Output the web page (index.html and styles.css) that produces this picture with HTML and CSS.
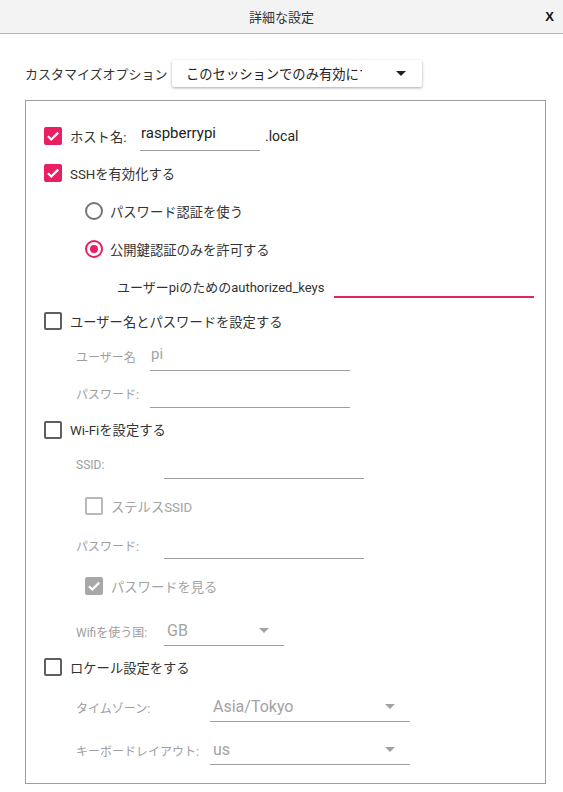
FILE: index.html
```html
<!DOCTYPE html>
<html lang="ja">
<head>
<meta charset="utf-8">
<title>詳細な設定</title>
<link rel="stylesheet" href="styles.css">
</head>
<body>
<header class="titlebar">
  <span class="title">詳細な設定</span>
  <span class="close">X</span>
</header>
<main class="content">
  <div class="option-row">
    <span class="option-label">カスタマイズオプション</span>
    <div class="combo">
      <span class="combo-text">このセッションでのみ有効にする</span>
      <span class="combo-arrow"></span>
    </div>
  </div>

  <section class="panel">
    <div class="row h36">
      <span class="cb on"><svg viewBox="0 0 18 18"><path d="M4 9.2l3.3 3.3L14.2 5.6"/></svg></span>
      <span class="lbl host-lbl">ホスト名:</span>
      <span class="field host-field">raspberrypi</span>
      <span class="suffix">.local</span>
    </div>
    <div class="row h38">
      <span class="cb on"><svg viewBox="0 0 18 18"><path d="M4 9.2l3.3 3.3L14.2 5.6"/></svg></span>
      <span class="lbl">SSHを有効化する</span>
    </div>
    <div class="row h38 indent1">
      <span class="radio"></span>
      <span class="lbl">パスワード認証を使う</span>
    </div>
    <div class="row h38 indent1">
      <span class="radio on"><span class="dot"></span></span>
      <span class="lbl">公開鍵認証のみを許可する</span>
    </div>
    <div class="row h36 indent2">
      <span class="lbl key-lbl">ユーザーpiのためのauthorized_keys</span>
      <span class="field key-field"></span>
    </div>
    <div class="row h34">
      <span class="cb"></span>
      <span class="lbl">ユーザー名とパスワードを設定する</span>
    </div>
    <div class="row h37 sub">
      <span class="sublbl w74">ユーザー名</span>
      <span class="field f200 muted">pi</span>
    </div>
    <div class="row h37 sub">
      <span class="sublbl w74">パスワード:</span>
      <span class="field f200"></span>
    </div>
    <div class="row h35">
      <span class="cb"></span>
      <span class="lbl">Wi-Fiを設定する</span>
    </div>
    <div class="row h36 sub">
      <span class="sublbl w88">SSID:</span>
      <span class="field f200"></span>
    </div>
    <div class="row h46 indent1">
      <span class="cb dis"></span>
      <span class="lbl muted">ステルスSSID</span>
    </div>
    <div class="row h32 sub">
      <span class="sublbl w88">パスワード:</span>
      <span class="field f200"></span>
    </div>
    <div class="row h50 indent1">
      <span class="cb dis on"><svg viewBox="0 0 18 18"><path d="M4 9.2l3.3 3.3L14.2 5.6"/></svg></span>
      <span class="lbl muted">パスワードを見る</span>
    </div>
    <div class="row h40 sub">
      <span class="sublbl w88">Wifiを使う国:</span>
      <span class="select f120"><span class="sel-text">GB</span><span class="sel-arrow"></span></span>
    </div>
    <div class="row h32">
      <span class="cb"></span>
      <span class="lbl">ロケール設定をする</span>
    </div>
    <div class="row h48 sub">
      <span class="sublbl w134">タイムゾーン:</span>
      <span class="select f200"><span class="sel-text">Asia/Tokyo</span><span class="sel-arrow"></span></span>
    </div>
    <div class="row h38 sub">
      <span class="sublbl w134">キーボードレイアウト:</span>
      <span class="select f200"><span class="sel-text">us</span><span class="sel-arrow"></span></span>
    </div>
  </section>
</main>
</body>
</html>
```
FILE: styles.css
```css
* { box-sizing: border-box; }
html, body { margin: 0; padding: 0; background: #fff; }
body {
  width: 563px;
  height: 792px;
  overflow: hidden;
  font-family: Roboto, "Noto Sans CJK JP", sans-serif;
  font-size: 13px;
  color: #333;
}
.titlebar {
  height: 34px;
  background: #f3f3f3;
  border-bottom: 1px solid #b4b4b4;
  display: flex;
  align-items: center;
  justify-content: center;
  position: relative;
}
.title { font-size: 13px; color: #333; }
.close {
  position: absolute;
  right: 9px;
  top: 9px;
  font-family: "Liberation Sans", sans-serif;
  font-weight: bold;
  font-size: 13px;
  color: #111;
}
.content { padding: 26px 0 0 25px; }
.option-row { display: flex; align-items: center; height: 27px; }
.option-label { width: 147px; font-size: 13px; }
.combo {
  width: 250px;
  height: 27px;
  background: #fff;
  border-radius: 2px;
  box-shadow: 0 1px 3px rgba(0,0,0,0.35);
  display: flex;
  align-items: center;
  padding-left: 14px;
}
.combo-text {
  width: 176px;
  overflow: hidden;
  white-space: nowrap;
  font-size: 13.3px;
  color: #222;
}
.combo-arrow {
  margin-left: 34px;
  width: 0; height: 0;
  border-left: 5px solid transparent;
  border-right: 5px solid transparent;
  border-top: 5px solid #222;
}
.panel {
  margin-top: 13px;
  width: 521px;
  height: 684px;
  border: 1px solid #9e9e9e;
  padding: 17px 0 0 18px;
}
.row { display: flex; align-items: center; }
.h32 { height: 32px; }
.h34 { height: 34px; }
.h35 { height: 35px; }
.h36 { height: 36px; }
.h37 { height: 37px; }
.h38 { height: 38px; }
.h40 { height: 40px; }
.h46 { height: 46px; }
.h48 { height: 48px; }
.h50 { height: 50px; }
.indent1 { padding-left: 41px; }
.indent2 { padding-left: 73px; }
.sub { padding-left: 32px; }
.cb {
  width: 18px; height: 18px;
  border: 2px solid #5f5f5f;
  border-radius: 2px;
  flex: none;
  display: flex;
  align-items: center;
  justify-content: center;
  margin-right: 8px;
}
.cb.on { background: #e91e63; border-color: #e91e63; }
.cb.dis { border-color: #b8b8b8; }
.cb.dis.on { background: #a8a8a8; border-color: #a8a8a8; }
.cb svg { width: 18px; height: 18px; flex: none; }
.cb svg path { fill: none; stroke: #fff; stroke-width: 2.2; }
.radio {
  width: 18px; height: 18px;
  border: 2px solid #757575;
  border-radius: 50%;
  flex: none;
  margin-right: 7px;
  display: flex;
  align-items: center;
  justify-content: center;
}
.radio.on { border-color: #e91e63; }
.dot { width: 8px; height: 8px; border-radius: 50%; background: #e91e63; }
.lbl { font-size: 13.3px; color: #333; white-space: nowrap; }
.lbl.muted { color: #a3a3a3; }
.host-lbl { width: 70px; }
.field {
  height: 30px;
  border-bottom: 1px solid #9e9e9e;
  display: flex;
  align-items: center;
  font-size: 14px;
  color: #222;
  padding-left: 1px;
}
.host-field { width: 120px; padding-bottom: 5px; font-size: 15px; }
.suffix { margin-left: 5px; font-size: 14px; color: #222; }
.key-lbl { width: 217px; font-size: 13px; }
.key-field { width: 200px; height: 24px; border-bottom: 2px solid #e91e63; }
.sublbl { font-size: 12px; color: #9e9e9e; white-space: nowrap; }
.w74 { width: 74px; }
.w88 { width: 88px; }
.w134 { width: 134px; }
.f200 { width: 200px; }
.f120 { width: 120px; }
.field.f200 { height: 28px; }
.field.muted { color: #a3a3a3; font-size: 15px; padding-bottom: 4px; }
.select {
  height: 30px;
  border-bottom: 1px solid #9e9e9e;
  display: flex;
  align-items: center;
  padding-left: 3px;
  padding-right: 15px;
}
.sel-text { flex: 1; font-size: 16px; color: #a3a3a3; }
.sel-arrow {
  width: 0; height: 0;
  border-left: 5px solid transparent;
  border-right: 5px solid transparent;
  border-top: 5px solid #a3a3a3;
}
```
